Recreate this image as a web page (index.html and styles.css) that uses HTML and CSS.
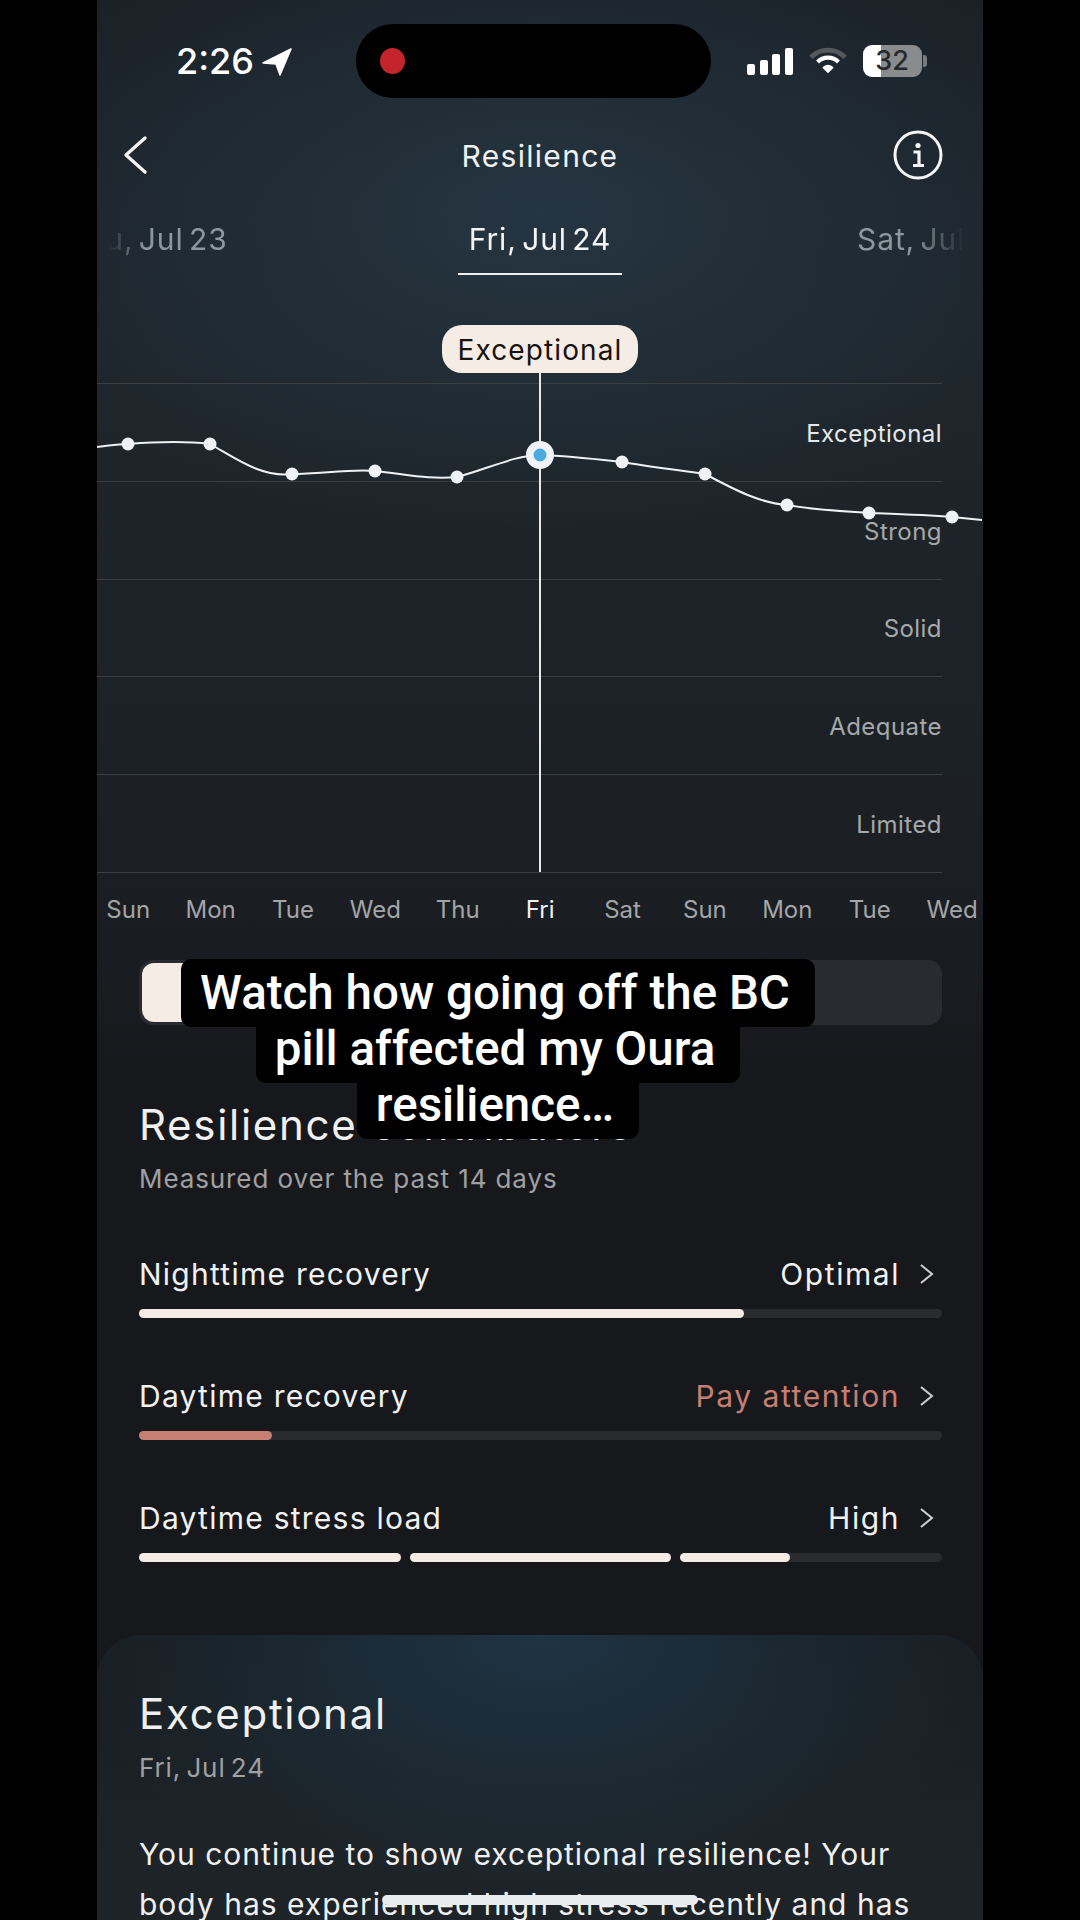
FILE: index.html
```html
<!DOCTYPE html>
<html>

<head>
  <meta name="viewport" content="width=device-width, initial-scale=1">
  <title>Resilience</title>
  <link rel="stylesheet" href="styles.css">
</head>

<body>
  <div class="screen">

    <div class="status">
      <div class="status-left">
        <span class="time">2:26</span>
        <svg class="arrow" width="30" height="28" viewBox="0 0 30 28"><path d="M29 1 L1 15 L14 16 L18 27 Z" fill="#fff" stroke="#fff" stroke-width="1.5" stroke-linejoin="round"/></svg>
      </div>
      <div class="island"><span class="rec"></span></div>
      <div class="status-right">
        <div class="signal">
          <span class="b1"></span><span class="b2"></span><span class="b3"></span><span class="b4"></span>
        </div>
        <svg class="wifi" width="38" height="28" viewBox="0 0 40 28">
          <path d="M2 10 C12 0 28 0 38 10" fill="none" stroke="#54595e" stroke-width="5"/>
          <path d="M9 15 C15 9 25 9 31 15" fill="none" stroke="#fff" stroke-width="4.5"/>
          <path d="M14 21 L20 27 L26 21 C22 17 18 17 14 21 Z" fill="#fff"/>
        </svg>
        <div class="battery"><span class="batt-num">32</span></div>
      </div>
    </div>

    <div class="nav">
      <svg class="back" width="26" height="42" viewBox="0 0 26 42"><path d="M23 4 L4 21 L23 38" fill="none" stroke="#f2f2f2" stroke-width="3.4" stroke-linecap="round" stroke-linejoin="round"/></svg>
      <div class="nav-title">Resilience</div>
      <svg class="info" width="50" height="50" viewBox="0 0 50 50">
        <circle cx="25" cy="25" r="23" fill="none" stroke="#f4f4f4" stroke-width="3"/>
        <circle cx="25" cy="15.5" r="2.6" fill="#f4f4f4"/>
        <path d="M20.5 22 H26 V35 M20 35.5 H31" fill="none" stroke="#f4f4f4" stroke-width="3.2"/>
      </svg>
    </div>

    <div class="dates">
      <div class="date-item"><span class="date">Thu, Jul 23</span></div>
      <div class="date-item"><span class="date active">Fri, Jul 24</span></div>
      <div class="date-item"><span class="date">Sat, Jul 25</span></div>
    </div>

    <div class="chart">
      <div class="pill-row"><span class="pill">Exceptional</span></div>
      <div class="levels">
        <div class="level bright">Exceptional</div>
        <div class="level">Strong</div>
        <div class="level">Solid</div>
        <div class="level">Adequate</div>
        <div class="level">Limited</div>
      </div>
      <svg class="plot" viewBox="97 325 886 548">
        <path d="M540 373 V872" stroke="#e9e9e9" stroke-width="2"/>
        <path d="M97 447 C107 446 118 444 128 444 C155 442 185 441 210 444 C235 458 262 478 292 474 C320 474 350 469 375 471 C405 474 430 480 457 477 C485 470 515 455 540 455 C570 456 595 459 622 462 C650 467 680 470 705 474 C735 490 760 503 787 505 C815 510 840 511 869 513 C895 514 925 515 952 517 L982 520" fill="none" stroke="#eef1f4" stroke-width="2"/>
        <g fill="#eef2f6">
          <circle cx="128" cy="444" r="6.5"/>
          <circle cx="210" cy="444" r="6.5"/>
          <circle cx="292" cy="474" r="6.5"/>
          <circle cx="375" cy="471" r="6.5"/>
          <circle cx="457" cy="477" r="6.5"/>
          <circle cx="622" cy="462" r="6.5"/>
          <circle cx="705" cy="474" r="6.5"/>
          <circle cx="787" cy="505" r="6.5"/>
          <circle cx="869" cy="513" r="6.5"/>
          <circle cx="952" cy="517" r="6.5"/>
          <circle cx="540" cy="455" r="14"/>
        </g>
        <circle cx="540" cy="455" r="6.5" fill="#4aa9de"/>
      </svg>
    </div>

    <div class="days">
      <span>Sun</span><span>Mon</span><span>Tue</span><span>Wed</span><span>Thu</span><span class="today">Fri</span><span>Sat</span><span>Sun</span><span>Mon</span><span>Tue</span><span>Wed</span>
    </div>

    <div class="toggle"><div class="knob"></div></div>

    <div class="section">
      <h2 class="big">Resilience contributors</h2>
      <p class="sub">Measured over the past 14 days</p>

      <div class="row">
        <div class="row-top">
          <span>Nighttime recovery</span>
          <span class="value">Optimal <svg class="chev" width="14" height="22" viewBox="0 0 14 22"><path d="M1 2 L12 11 L1 20" fill="none" stroke="#cfcfcf" stroke-width="2"/></svg></span>
        </div>
        <div class="bar"><div class="track"><div class="fill" style="width:75.3%"></div></div></div>
      </div>

      <div class="row">
        <div class="row-top">
          <span>Daytime recovery</span>
          <span class="value warn">Pay attention <svg class="chev" width="14" height="22" viewBox="0 0 14 22"><path d="M1 2 L12 11 L1 20" fill="none" stroke="#cfcfcf" stroke-width="2"/></svg></span>
        </div>
        <div class="bar"><div class="track"><div class="fill warn-fill" style="width:16.6%"></div></div></div>
      </div>

      <div class="row">
        <div class="row-top">
          <span>Daytime stress load</span>
          <span class="value">High <svg class="chev" width="14" height="22" viewBox="0 0 14 22"><path d="M1 2 L12 11 L1 20" fill="none" stroke="#cfcfcf" stroke-width="2"/></svg></span>
        </div>
        <div class="bar">
          <div class="track"><div class="fill" style="width:100%"></div></div>
          <div class="track"><div class="fill" style="width:100%"></div></div>
          <div class="track"><div class="fill" style="width:42%"></div></div>
        </div>
      </div>
    </div>

    <div class="card">
      <h2 class="big">Exceptional</h2>
      <p class="sub">Fri, Jul 24</p>
      <p class="body-text">You continue to show exceptional resilience! Your body has experienced high stress recently and has</p>
    </div>

    <div class="caption">
      <span>Watch how going off the BC</span>
      <span>pill affected my Oura</span>
      <span>resilience…</span>
    </div>

    <div class="home-bar"></div>
  </div>
</body>

</html>
```

FILE: styles.css
```css
* {
  box-sizing: border-box;
}

body {
  margin: 0;
  background-color: #000;
  font-family: "Inter", "Liberation Sans", sans-serif;
  color: #f1f1f1;
}

.screen {
  position: relative;
  width: 886px;
  height: 1920px;
  margin: 0 auto;
  overflow: hidden;
  background:
    radial-gradient(ellipse 600px 320px at 50% 215px, #253541 0%, rgba(37, 53, 65, 0) 100%),
    linear-gradient(#1a2026 0, #1e252b 400px, #1c2025 800px, #17181c 1100px);
}

/* status bar */
.status {
  display: flex;
  align-items: center;
  height: 74px;
  margin-top: 24px;
  padding-left: 79px;
}

.status-left {
  display: flex;
  align-items: center;
  gap: 8px;
  width: 180px;
}

.time {
  font-size: 36px;
  font-weight: 500;
  color: #fff;
}

.arrow {
  margin-top: 1px;
}

.island {
  display: flex;
  align-items: center;
  width: 355px;
  height: 74px;
  border-radius: 37px;
  background-color: #000;
  padding-left: 24px;
}

.rec {
  width: 25px;
  height: 26px;
  border-radius: 50%;
  background-color: #c4242c;
}

.status-right {
  display: flex;
  align-items: center;
  margin-left: 36px;
}

.signal {
  display: flex;
  align-items: flex-end;
  gap: 4.5px;
  height: 27px;
}

.signal span {
  width: 8px;
  border-radius: 2px;
  background-color: #fff;
}

.b1 { height: 11px; }
.b2 { height: 15px; }
.b3 { height: 21px; }
.b4 { height: 27px; }

.wifi {
  margin-left: 16px;
}

.battery {
  position: relative;
  width: 59px;
  height: 32px;
  margin-left: 16px;
  border-radius: 9px;
  background: linear-gradient(to right, #fff 0, #fff 30%, #8a8b8c 30%);
  text-align: center;
}

.battery::after {
  content: "";
  position: absolute;
  top: 10px;
  right: -5px;
  width: 4px;
  height: 12px;
  border-radius: 0 3px 3px 0;
  background-color: #77797b;
}

.batt-num {
  font-size: 27px;
  line-height: 32px;
  font-weight: 500;
  color: #26292c;
}

/* nav */
.nav {
  display: grid;
  grid-template-columns: 1fr auto 1fr;
  align-items: center;
  height: 114px;
  padding: 0 40px;
}

.back {
  margin-left: -15px;
}

.nav-title {
  padding-top: 2px;
  font-size: 30px;
  letter-spacing: 1.3px;
}

.info {
  justify-self: end;
}

.dates {
  display: flex;
  justify-content: center;
  height: 64px;
  overflow: hidden;
  -webkit-mask-image: linear-gradient(to right, transparent 12px, #000 48px, #000 calc(100% - 70px), transparent calc(100% - 18px));
  mask-image: linear-gradient(to right, transparent 12px, #000 48px, #000 calc(100% - 70px), transparent calc(100% - 18px));
}

.date-item {
  flex: 0 0 393px;
  text-align: center;
}

.date {
  display: inline-block;
  width: 164px;
  height: 63px;
  font-size: 30px;
  line-height: 54px;
  letter-spacing: 0.9px;
  word-spacing: -4px;
  color: #8d979e;
}

.date.active {
  color: #f4f4f4;
  border-bottom: 2px solid #f0f0f0;
}

/* chart */
.chart {
  position: relative;
  margin-top: 49px;
}

.pill-row {
  display: flex;
  justify-content: center;
  height: 58px;
}

.pill {
  height: 48px;
  padding: 0 16px;
  border-radius: 20px;
  background-color: #f6ece6;
  color: #17130f;
  font-size: 28px;
  line-height: 50px;
  letter-spacing: 1.1px;
}

.levels {
  margin-right: 41px;
  border-bottom: 1px solid #3a3f44;
}

.level {
  display: flex;
  align-items: center;
  justify-content: flex-end;
  height: 97.8px;
  padding-top: 2px;
  border-top: 1px solid #3a3f44;
  font-size: 24px;
  letter-spacing: 0.45px;
  color: #a6a8aa;
}

.level.bright {
  color: #e8e8e8;
}

.plot {
  position: absolute;
  top: 0;
  left: 0;
  width: 886px;
  height: 548px;
}

.days {
  display: flex;
  height: 74px;
  margin-left: -10px;
  font-size: 24px;
  line-height: 74px;
  color: #a4a5a7;
}

.days span {
  flex: 0 0 82.4px;
  text-align: center;
}

.days .today {
  color: #f1f1f1;
}

.toggle {
  height: 65px;
  margin: 13px 41px 0 42px;
  padding: 3px;
  border-radius: 14px;
  background-color: #2a2b30;
}

.knob {
  width: 400px;
  height: 59px;
  border-radius: 12px;
  background-color: #f6ece6;
}

/* contributors */
.section {
  padding: 75px 41px 0 42px;
}

.big {
  margin: 0;
  font-size: 42px;
  line-height: 50px;
  font-weight: 400;
  letter-spacing: 1.7px;
  color: #f0f0f0;
}

.sub {
  margin: 12px 0 0;
  font-size: 26px;
  line-height: 34px;
  letter-spacing: 0.9px;
  color: #a0a0a2;
}

.row {
  margin-top: 58px;
}

.row-top {
  display: flex;
  justify-content: space-between;
  align-items: center;
  height: 40px;
  font-size: 30px;
  letter-spacing: 1.25px;
}

.value {
  display: flex;
  align-items: center;
  gap: 20px;
  padding-right: 8px;
  letter-spacing: 1.55px;
}

.warn {
  color: #c67f72;
}

.bar {
  display: flex;
  gap: 9px;
  margin-top: 15px;
}

.track {
  flex: 1;
  height: 9px;
  border-radius: 5px;
  background-color: #2a2b2f;
}

.fill {
  height: 100%;
  border-radius: 5px;
  background-color: #f6ece6;
}

.warn-fill {
  background-color: #c67f72;
}

/* summary card */
.card {
  height: 400px;
  margin-top: 73px;
  padding: 54px 41px 0 42px;
  border-radius: 44px 44px 0 0;
  background:
    radial-gradient(ellipse 480px 270px at 50% 0, #1e3444 0%, rgba(30, 52, 68, 0) 100%),
    linear-gradient(#181c20, #1d2327 220px);
}

.card .sub {
  margin-top: 11px;
  line-height: 36px;
  word-spacing: -3px;
}

.body-text {
  margin: 43px 0 0;
  font-size: 30px;
  line-height: 50px;
  letter-spacing: 1px;
  color: #f0f0f0;
}

/* video caption on top */
.caption {
  position: absolute;
  top: 959px;
  left: 0;
  width: 802px;
  display: flex;
  flex-direction: column;
  align-items: center;
  isolation: isolate;
  font-family: "Roboto", "Liberation Sans", sans-serif;
  font-size: 47.5px;
  font-weight: 500;
  line-height: 56px;
  color: #fff;
}

.caption span {
  position: relative;
  padding: 6px 25px 6px 19px;
  margin-top: -12px;
}

/* boxes sit under all three lines so descenders aren't cut by the next box */
.caption span::before {
  content: "";
  position: absolute;
  top: 0;
  right: 0;
  bottom: 0;
  left: 0;
  z-index: -1;
  border-radius: 10px;
  background-color: #000;
}

.caption span:first-child {
  margin-top: 0;
}

.home-bar {
  position: absolute;
  bottom: 15px;
  left: 285px;
  width: 316px;
  height: 10px;
  border-radius: 5px;
  background-color: #e8ebee;
}
```
